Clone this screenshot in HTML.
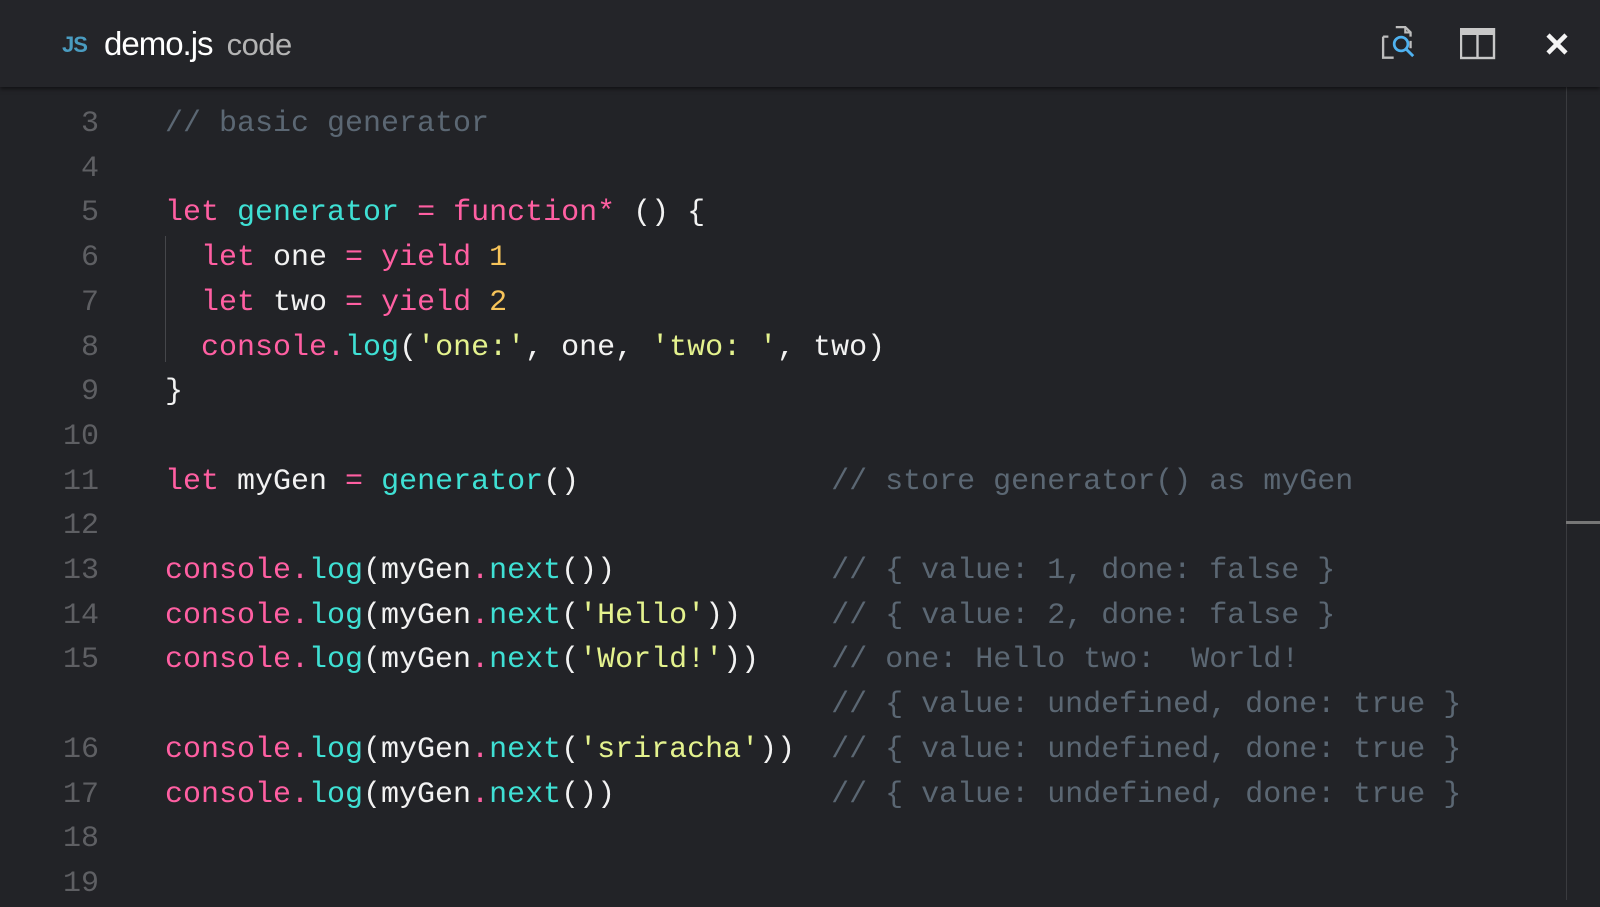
<!DOCTYPE html>
<html><head><style>
html,body{margin:0;padding:0;width:1600px;height:900px;overflow:hidden;background:#222327;}
.hdr{position:absolute;left:0;top:0;width:1600px;height:87px;background:#242529;box-shadow:0 2px 4px rgba(0,0,0,.5);z-index:2}
.js{position:absolute;left:62px;top:32px;font:bold 22px "Liberation Sans",sans-serif;color:#4a9cc0;letter-spacing:-1px}
.title{position:absolute;left:104px;top:25px;font:33px "Liberation Sans",sans-serif;color:#fff;letter-spacing:-1px}
.title span{color:#b4b4b4;font-size:31px;margin-left:14px;letter-spacing:-0.5px}
.code{position:absolute;left:0;top:102px;font:30px/44.7px "Liberation Mono",monospace;white-space:pre;color:#f2f2f2}
.ln{position:absolute;left:0;top:0;width:99px;text-align:right;color:#5e5f63}
.tx{position:absolute;left:165px;top:0}
.c{color:#5b6773}.k{color:#ff5fa2}.f{color:#3fe0d4}.n{color:#f7c45a}.s{color:#e4f28e}
.guide{position:absolute;left:165px;top:236px;width:1px;height:126px;background:#45464a}
.vl{position:absolute;left:1566px;top:87px;width:1px;height:813px;background:#3a3b3f}
.thumb{position:absolute;left:1566px;top:521px;width:34px;height:3px;background:#777}
</style></head><body>
<div class="hdr">
<div class="js">JS</div>
<div class="title">demo.js<span>code</span></div>
<svg style="position:absolute;left:1380px;top:25px" width="40" height="38" viewBox="0 0 36 36">
<path d="M14 2h9l5 5v4M28 15v7M2 11h5M2 11v20h10" fill="none" stroke="#bdbdbd" stroke-width="2.2"/>
<path d="M23 2v5h5" fill="none" stroke="#bdbdbd" stroke-width="2"/>
<circle cx="19" cy="18" r="6.5" fill="none" stroke="#4fb2f0" stroke-width="2.6"/>
<path d="M23.5 22.5l7 7" stroke="#4fb2f0" stroke-width="2.8"/>
</svg>
<svg style="position:absolute;left:1460px;top:28px" width="36" height="32" viewBox="0 0 36 32">
<rect x="1" y="1" width="33" height="29" fill="none" stroke="#c8c8c8" stroke-width="2.4"/>
<rect x="1" y="1" width="33" height="6" fill="#c8c8c8"/>
<path d="M17.5 1v29" stroke="#c8c8c8" stroke-width="2.4"/>
</svg>
<svg style="position:absolute;left:1545px;top:32px" width="24" height="24" viewBox="0 0 24 24">
<path d="M3 3l18 18M21 3L3 21" stroke="#f4f4f4" stroke-width="4.5"/>
</svg>
</div>
<div class="guide"></div>
<div class="vl"></div><div class="thumb"></div>
<div class="code"><div class="ln">3
4
5
6
7
8
9
10
11
12
13
14
15

16
17
18
19</div><div class="tx"><span class="c">// basic generator</span>

<span class="k">let</span> <span class="f">generator</span> <span class="k">=</span> <span class="k">function*</span> () {
  <span class="k">let</span> one <span class="k">=</span> <span class="k">yield</span> <span class="n">1</span>
  <span class="k">let</span> two <span class="k">=</span> <span class="k">yield</span> <span class="n">2</span>
  <span class="k">console.</span><span class="f">log</span>(<span class="s">'one:'</span>, one, <span class="s">'two: '</span>, two)
}

<span class="k">let</span> myGen <span class="k">=</span> <span class="f">generator</span>()              <span class="c">// store generator() as myGen</span>

<span class="k">console.</span><span class="f">log</span>(myGen<span class="k">.</span><span class="f">next</span>())            <span class="c">// { value: 1, done: false }</span>
<span class="k">console.</span><span class="f">log</span>(myGen<span class="k">.</span><span class="f">next</span>(<span class="s">'Hello'</span>))     <span class="c">// { value: 2, done: false }</span>
<span class="k">console.</span><span class="f">log</span>(myGen<span class="k">.</span><span class="f">next</span>(<span class="s">'World!'</span>))    <span class="c">// one: Hello two:  World!</span>
                                     <span class="c">// { value: undefined, done: true }</span>
<span class="k">console.</span><span class="f">log</span>(myGen<span class="k">.</span><span class="f">next</span>(<span class="s">'sriracha'</span>))  <span class="c">// { value: undefined, done: true }</span>
<span class="k">console.</span><span class="f">log</span>(myGen<span class="k">.</span><span class="f">next</span>())            <span class="c">// { value: undefined, done: true }</span></div></div>
</body></html>
